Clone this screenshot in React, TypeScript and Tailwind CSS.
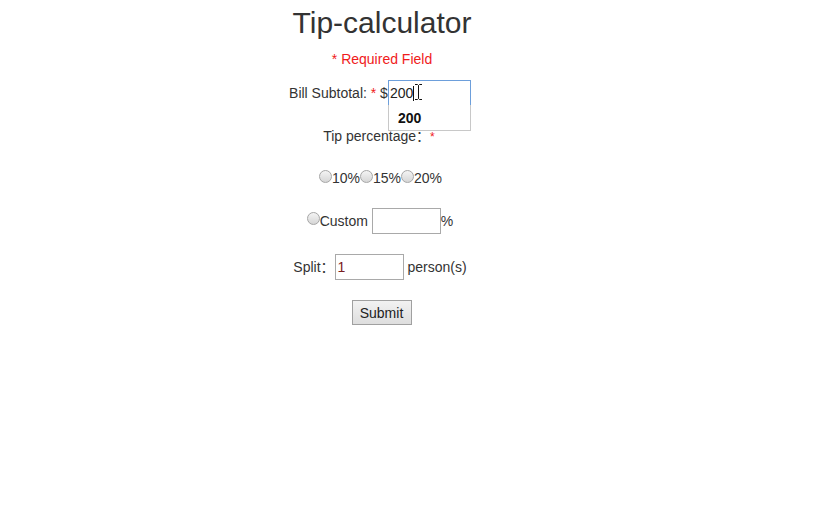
import React from "react";

function Radio() {
  return (
    <span className="inline-block w-[13px] h-[13px] rounded-full border border-[#a6a6a6] bg-gradient-to-b from-[#f4f4f4] to-[#d6d6d6] relative top-[-3px]" />
  );
}

function IBeam() {
  return (
    <svg width="9" height="18" viewBox="0 0 9 18" className="absolute left-[26px] top-[3px]">
      <path d="M1 1.5h2.5l1 1 1-1H8M4.5 2.5v13M1 16.5h2.5l1-1 1 1H8" fill="none" stroke="#fff" strokeWidth="3" />
      <path d="M1 1.5h2.5l1 1 1-1H8M4.5 2.5v13M1 16.5h2.5l1-1 1 1H8" fill="none" stroke="#111" strokeWidth="1" />
    </svg>
  );
}

export default function App() {
  return (
    <div className="min-h-[508px] w-full bg-white font-['Liberation_Sans','Noto_Sans_CJK_SC',Arial,sans-serif] text-[#333]">
      <div className="w-[764px] flex flex-col items-center text-[14px] leading-[16px]">
        <h1 className="mt-[6px] text-[30px] leading-[34px] font-normal text-[#333]">Tip-calculator</h1>

        <p className="mt-[11px] text-[#f01b1b]">* Required Field</p>

        <div className="mt-[13px] flex items-center h-[26px] pr-[4px]">
          <span>Bill Subtotal:&nbsp;</span>
          <span className="text-[#f01b1b]">*</span>
          <span>&nbsp;$</span>
          <div className="relative">
            <div className="w-[83px] h-[26px] border border-[#6d9fdb] px-[1px] flex items-center text-[14px] text-[#222]">
              200<span className="inline-block w-px h-[15px] bg-[#111]" />
            </div>
            <IBeam />
            <div className="absolute left-0 top-[25px] w-[83px] h-[26px] border border-[#c8c8c8] border-t-0 bg-white pl-[9px] flex items-center font-bold text-[#111] text-[14px]">
              200
            </div>
          </div>
        </div>

        <p className="mt-[22px] pr-[6px]">
          Tip percentage：<span className="text-[#f01b1b] text-[12px]">*</span>
        </p>

        <div className="mt-[25px] flex items-end pr-[3px]">
          <Radio />
          <span>10%</span>
          <Radio />
          <span>15%</span>
          <Radio />
          <span>20%</span>
        </div>

        <div className="mt-[22px] flex items-center h-[26px] pr-[4px]">
          <Radio />
          <span>Custom&nbsp;</span>
          <div className="w-[69px] h-[26px] border border-[#a9a9a9] bg-white" />
          <span>%</span>
        </div>

        <div className="mt-[20px] flex items-center h-[26px] pr-[4px]">
          <span>Split：</span>
          <div className="w-[69px] h-[26px] border border-[#a9a9a9] bg-white px-[2px] flex items-center text-[#7a2020]">1</div>
          <span>&nbsp;person(s)</span>
        </div>

        <button className="mt-[20px] mr-[1px] w-[60px] h-[25px] border border-[#a0a0a0] bg-gradient-to-b from-[#f2f2f2] to-[#dedede] text-[14px] text-[#222] leading-[16px]">
          Submit
        </button>
      </div>
    </div>
  );
}
